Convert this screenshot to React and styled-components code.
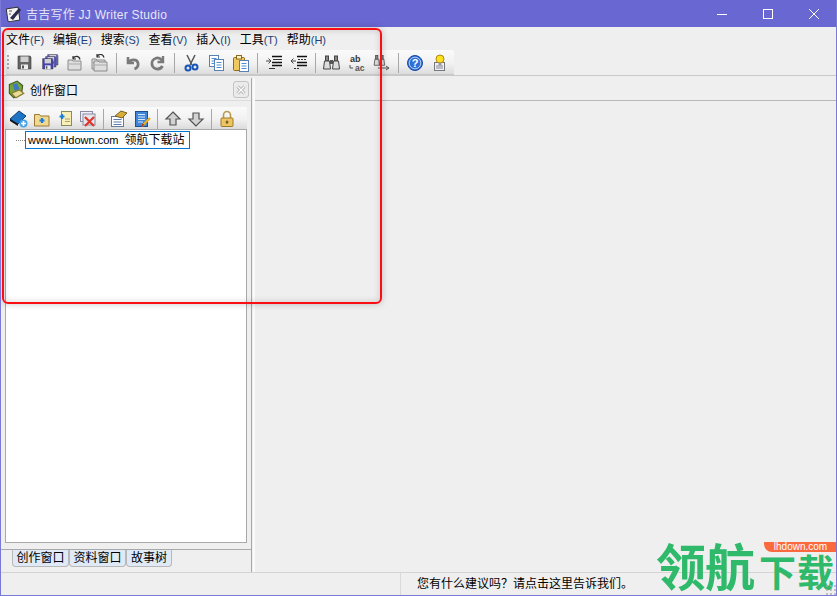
import React from 'react';
import styled, { createGlobalStyle } from 'styled-components';

const Global = createGlobalStyle`
  html, body { margin: 0; padding: 0; background: #efefef; overflow: hidden; }
  * { box-sizing: border-box; }
`;

const CJK = `"Liberation Sans", "Noto Sans CJK SC", sans-serif`;

const Win = styled.div`
  position: relative;
  width: 837px;
  height: 596px;
  display: flex;
  flex-direction: column;
  background: #efefef;
  border: 1px solid #7b79d6;
  border-top: 0;
  font-family: ${CJK};
  font-size: 12px;
  color: #000;
  overflow: hidden;
`;

const TitleBar = styled.div`
  height: 27px;
  flex: none;
  margin: 0 -1px;
  background: #6967d1;
  display: flex;
  align-items: center;
  padding-left: 5px;
  color: #e6e6f7;
  font-size: 12px;
`;
const TitleText = styled.span`
  margin-left: 3px;
  flex: 1;
  letter-spacing: 0.25px;
`;
const WinBtn = styled.div`
  width: 46px;
  height: 27px;
  display: flex;
  align-items: center;
  justify-content: center;
`;

const MenuBar = styled.div`
  height: 23px;
  flex: none;
  display: flex;
  align-items: center;
  padding-left: 5px;
  gap: 9px;
`;
const MenuItem = styled.span`
  white-space: nowrap;
  span { color: #1c3f78; font-size: 11px; }
`;

const Bar = styled.div`
  display: flex;
  align-items: center;
  height: ${p => p.$h}px;
  width: ${p => p.$w}px;
  flex: none;
  padding-top: 2px;
  background: linear-gradient(#fafafa, #f2f2f2 55%, #dcdcdc);
  border-bottom: 1px solid #c8c8c8;
`;
const MainToolbar = styled(Bar)`
  position: relative;
  margin-left: 5px;
  padding-left: 6px;
  border-radius: 2px 2px 0 0;
`;
const Grip = styled.div`
  position: absolute;
  left: 1px;
  top: 5px;
  width: 2px;
  height: 15px;
  background: repeating-linear-gradient(#aaa 0 2px, transparent 2px 4px);
`;
const Tool = styled.div`
  width: ${p => p.$w}px;
  height: 20px;
  flex: none;
  display: flex;
  align-items: center;
  justify-content: center;
`;
const Sep = styled.div`
  width: 8px;
  height: 20px;
  flex: none;
  display: flex;
  justify-content: center;
  &::after { content: ''; width: 1px; background: #a8a8a8; }
`;
const TopRule = styled.div`
  height: 3px;
  flex: none;
  border-top: 1px solid #c9c9c9;
`;

const Main = styled.div`
  flex: 1;
  display: flex;
  min-height: 0;
`;
const LeftPane = styled.div`
  width: 251px;
  flex: none;
  border-right: 1px solid #a9a9a9;
  display: flex;
  flex-direction: column;
`;
const PaneHead = styled.div`
  height: 23px;
  flex: none;
  display: flex;
  align-items: center;
  padding: 1px 2px 0 5px;
  border-bottom: 1px solid #dcdcdc;
`;
const PaneTitle = styled.span`
  margin-left: 4px;
  flex: 1;
`;
const CloseBtn = styled.div`
  width: 16px;
  height: 17px;
  border: 1px solid #c4c4c4;
  border-radius: 3px;
  background: #ebebeb;
  display: flex;
  align-items: center;
  justify-content: center;
`;
const PaneToolbar = styled(Bar)`
  margin: 6px 0 0 4px;
  padding-left: 2px;
  border-bottom: 0;
`;
const Tree = styled.div`
  flex: 1;
  margin: 0 4px;
  background: #fff;
  border: 1px solid #a9a9a9;
  padding: 1px 0 0 10px;
  display: flex;
  align-items: flex-start;
`;
const TreeDots = styled.div`
  width: 9px;
  margin-top: 9px;
  border-top: 1px dotted #888;
`;
const TreeEdit = styled.div`
  width: 165px;
  height: 18px;
  border: 1px solid #0078d7;
  padding-left: 2px;
  line-height: 17px;
  white-space: pre;
  background: #fff;
`;
const Latin = styled.span`
  font-size: 11px;
`;
const Tabs = styled.div`
  height: 23px;
  flex: none;
  margin-top: 6px;
  border-top: 1px solid #a9a9a9;
  padding-left: 11px;
  display: flex;
  align-items: flex-start;
`;
const Tab = styled.div`
  height: 17px;
  width: ${p => p.$w}px;
  background: #e0e9f6;
  border: 1px solid #b8b8b8;
  border-top: 0;
  border-radius: 0 0 4px 4px;
  text-align: center;
  line-height: 17px;
`;
const RightPane = styled.div`
  flex: 1;
  border-left: 2px solid #fafafa;
  margin-left: 1px;
`;
const RightHead = styled.div`
  height: 23px;
  border-bottom: 1px solid #b9b9b9;
`;
const StatusBar = styled.div`
  height: 23px;
  flex: none;
  border-top: 1px solid #d4d4d4;
  display: flex;
  align-items: center;
  padding-left: 399px;
`;
const StatusCell = styled.div`
  border-left: 1px solid #d9d9d9;
  padding-left: 16px;
  height: 22px;
  line-height: 22px;
`;

/* over the page: the red mark from the screenshot and the site's watermark */
const RedMark = styled.div`
  position: absolute;
  left: 1px;
  top: 28px;
  width: 380px;
  height: 276px;
  border: 2px solid #fb0d14;
  border-radius: 6px;
  box-shadow: 0 0 7px rgba(0,0,0,.22), inset 0 0 7px rgba(0,0,0,.16);
  pointer-events: none;
`;
const Mark = styled.div`
  position: absolute;
  right: -1px;
  bottom: 3px;
  width: 181px;
  height: 52px;
  font-family: "Noto Sans CJK SC", sans-serif;
  font-weight: 700;
  color: #2fb96b;
  display: flex;
  align-items: flex-end;
  white-space: nowrap;
`;
const MarkBig = styled.span`
  font-size: 50px;
  line-height: 52px;
  letter-spacing: -1px;
  margin-bottom: 2px;
`;
const MarkSmall = styled.span`
  font-size: 37px;
  line-height: 42px;
  margin-left: 5px;
  letter-spacing: 1px;
`;
const Pill = styled.div`
  position: absolute;
  right: 0;
  top: 2px;
  width: 73px;
  height: 10px;
  background: #fb6a3e;
  border-radius: 0 0 0 8px;
  color: #fff;
  font: 400 10px/10px "Liberation Sans", sans-serif;
  text-align: center;
`;
const ResizeGrip = styled.div`
  position: absolute;
  right: 0;
  bottom: 0;
  width: 11px;
  height: 11px;
  background: radial-gradient(circle, #aaa 1px, transparent 1.2px) 0 0 / 4px 4px;
  opacity: .7;
`;

const S = ({ children, w = 18, h = 18, vb = '0 0 18 18' }) => (
  <svg width={w} height={h} viewBox={vb} style={{ display: 'block' }}>{children}</svg>
);

const Floppy = ({ dark = '#666', x = 0, y = 0 }) => (
  <g transform={`translate(${x} ${y})`}>
    <path d="M2 2h12l1 1v12H2z" fill={dark} stroke="#3a3a3a" strokeWidth=".6" />
    <rect x="4.500" y="2.500" width="8" height="5.500" fill="#d0d0d0" />
    <rect x="5" y="10.500" width="7" height="4.500" fill="#eee" />
    <rect x="6" y="11.500" width="2" height="3" fill="#555" />
  </g>
);
const SaveIcon = () => <S><Floppy /></S>;
const SaveAllIcon = () => (
  <S>
    <g transform="translate(5 -1) scale(.8)"><Floppy dark="#6a6ac0" /></g>
    <g transform="translate(3 1) scale(.8)"><Floppy dark="#5a5ab8" /></g>
    <g transform="translate(0 3) scale(.8)"><Floppy dark="#4444ac" /></g>
  </S>
);
const Bin = ({ x = 0, y = 0 }) => (
  <g transform={`translate(${x} ${y})`}>
    <path d="M2 6h4l1 1h8v9H2z" fill="#dedede" stroke="#8a8a8a" />
    <path d="M2.500 10h12.500" stroke="#aaa" />
  </g>
);
const Curl = () => <path d="M7 4.500c2-3 6-3 7 1M7 2v3h3" fill="none" stroke="#333" strokeWidth="1.200" />;
const OpenIcon = () => <S><Bin /><Curl /></S>;
const OpenAllIcon = () => (
  <S><Bin x="-1" y="-1" /><Bin x="1" y="1" /><g transform="translate(-1 -2)"><Curl /></g></S>
);
const UndoIcon = () => (
  <S>
    <path d="M4 3v6h6" fill="none" stroke="#7a7a7a" strokeWidth="2.600" />
    <path d="M4.500 8.500C7 5 13 5 14 9c.5 2.500-1 5-3.500 6" fill="none" stroke="#7a7a7a" strokeWidth="2.800" />
  </S>
);
const RedoIcon = () => (
  <S>
    <path d="M14 2v6h-5.500" fill="none" stroke="#7a7a7a" strokeWidth="2.400" />
    <path d="M13.500 7.500A5.500 5.500 0 109 15a5.500 5.500 0 004.500-3" fill="none" stroke="#7a7a7a" strokeWidth="2.800" />
  </S>
);
const CutIcon = () => (
  <S>
    <path d="M5 1l5 10M13 1l-5 10" stroke="#555" strokeWidth="1.500" />
    <circle cx="6" cy="14" r="2.500" fill="none" stroke="#1655b8" strokeWidth="2" />
    <circle cx="13" cy="13" r="2.500" fill="none" stroke="#1655b8" strokeWidth="2" />
  </S>
);
const Sheet = ({ x, y, line = '#4a8fd8', w = 9, h = 11 }) => (
  <g transform={`translate(${x} ${y})`}>
    <rect width={w} height={h} fill="#fff" stroke="#5a7fb0" />
    <path d={`M2 3h${w - 4}M2 5.500h${w - 4}M2 8h${w - 4}`} stroke={line} />
  </g>
);
const CopyIcon = () => <S><Sheet x="2.500" y="1.500" /><Sheet x="7.500" y="5.500" /></S>;
const PasteIcon = () => (
  <S>
    <rect x="1.500" y="3.500" width="11" height="13" rx="1" fill="#f0c860" stroke="#8a6a20" />
    <rect x="4.500" y="1.500" width="5" height="3.500" fill="#fff2b8" stroke="#8a6a20" />
    <Sheet x="7.500" y="6.500" />
  </S>
);
const IndentIcon = ({ flip }) => (
  <S>
    <path d="M7 2.500h10M7 8.500h10M7 11.500h10" stroke="#111" strokeWidth="1.500" />
    <path d="M8 5.500h9M4 14.500h6" stroke="#333" strokeWidth="1.200" strokeDasharray={flip ? '2 1' : undefined} />
    <path d={flip ? 'M6 7h-5M3.500 4.500L1 7l2.500 2.500' : 'M1 7h5M3.500 4.500L6 7 3.500 9.500'} fill="none" stroke="#444" />
  </S>
);
const OutdentIcon = () => <IndentIcon flip />;
const Binocular = ({ x = 0 }) => (
  <g transform={`translate(${x} 0)`}>
    <rect x="2.500" y="2" width="3" height="5" fill="#888" stroke="#444" />
    <path d="M1.500 7h5l1 8h-7z" fill="#ddd" stroke="#444" />
  </g>
);
const FindIcon = () => <S><Binocular /><Binocular x="9" /><rect x="7" y="6" width="3" height="4" fill="#555" /></S>;
const ReplaceIcon = () => (
  <S>
    <text x="2" y="8" fontSize="9" fontFamily="Liberation Sans" fontWeight="700" fill="#333">ab</text>
    <text x="7" y="17" fontSize="8.500" fontFamily="Liberation Sans" fontWeight="700" fill="#555">ac</text>
    <path d="M2 11v3h3" fill="none" stroke="#555" />
  </S>
);
const FindNextIcon = () => (
  <S>
    <g transform="scale(.75)"><Binocular x="1" /><Binocular x="8" /></g>
    <path d="M5 14h11M13 12l3 2-3 2" fill="none" stroke="#555" />
  </S>
);
const HelpIcon = () => (
  <S>
    <circle cx="9" cy="9" r="7.500" fill="#2f6fd6" stroke="#1a4aa0" />
    <circle cx="9" cy="9" r="5.800" fill="none" stroke="#cfe2fb" strokeWidth=".8" />
    <text x="9" y="13" fontSize="11" fontFamily="Liberation Sans" fontWeight="700" fill="#fff" textAnchor="middle">?</text>
  </S>
);
const TipIcon = () => (
  <S>
    <rect x="3.500" y="8.500" width="10" height="8" fill="#eef" stroke="#777" />
    <path d="M5 12h7M5 14h7" stroke="#888" />
    <circle cx="9" cy="5" r="4" fill="#ffe020" stroke="#b08a10" />
    <rect x="7.500" y="8.500" width="3" height="3" fill="#999" />
  </S>
);
const BookIcon = () => (
  <S w="20" h="20" vb="0 0 20 20">
    <path d="M1 10L10 2l7 5-8 8z" fill="#1d73c4" stroke="#0f3e78" />
    <path d="M1 10v2l8 5v-2z" fill="#111" />
    <circle cx="14.500" cy="14.500" r="4" fill="#4aa3e6" />
    <path d="M14.500 12v5M12 14.500h5" stroke="#fff" strokeWidth="1.600" />
  </S>
);
const Plus = () => <path d="M8 7v5M5.500 9.500h5" stroke="#1d7fd8" strokeWidth="2.200" />;
const FolderAddIcon = () => (
  <S>
    <path d="M1.500 4.500h5l1 1.500h8.500v10h-14.500z" fill="#f0d890" stroke="#9a7a30" />
    <g transform="translate(1 1)"><Plus /></g>
  </S>
);
const DocAddIcon = () => (
  <S>
    <rect x="5.500" y="1.500" width="10" height="14" fill="#f7eeb8" stroke="#8a8a5a" />
    <path d="M9 9h5M9 11.500h5" stroke="#aaa070" />
    <g transform="translate(-2 -3)"><Plus /></g>
  </S>
);
const DeleteIcon = () => (
  <S>
    <rect x="1.500" y="1.500" width="12" height="10" fill="#eef" stroke="#8a8aa0" />
    <rect x="4" y="4" width="12" height="11" fill="#e6e6ee" stroke="#8a8aa0" />
    <path d="M6 7l9 9M15 7l-9 9" stroke="#e0362c" strokeWidth="2.200" />
  </S>
);
const PropsIcon = () => (
  <S>
    <rect x="1.500" y="6.500" width="12" height="10" fill="#fff" stroke="#6a7a9a" />
    <path d="M3.500 9.500h8M3.500 12h8M3.500 14.500h8" stroke="#5a7ab0" />
    <path d="M5 6l6-5 6 2-5 5z" fill="#d8ae3a" stroke="#7a6020" />
  </S>
);
const NotebookIcon = () => (
  <S>
    <rect x="2.500" y="1.500" width="12" height="15" fill="#3e86d8" stroke="#1c4f94" />
    <path d="M5 4.500h7M5 7h7M5 9.500h7M5 12h5" stroke="#d8e8fb" />
    <path d="M9 16l8-8" stroke="#e8b020" strokeWidth="2.400" />
    <path d="M9 16l1.500-2" stroke="#c02818" strokeWidth="1.500" />
  </S>
);
const ArrowIcon = ({ down }) => (
  <S>
    <path
      transform={down ? 'rotate(180 9 9)' : undefined}
      d="M9 2l7 7h-4v6H6V9H2z"
      fill="#d2d2d2"
      stroke="#555"
      strokeWidth="1.200"
    />
  </S>
);
const DownIcon = () => <ArrowIcon down />;
const LockIcon = () => (
  <S>
    <path d="M5.500 8V5a3.500 3.500 0 017 0v3" fill="none" stroke="#b89a50" strokeWidth="1.600" />
    <rect x="3" y="8" width="12" height="8.500" rx="1" fill="#eec565" stroke="#a07a28" />
    <path d="M9 10.500v3.500M7.500 12h3" stroke="#5a4010" />
  </S>
);
const PaneIcon = () => (
  <S w="20" h="20">
    <path d="M3 4l7-3 5 4-1 8-7 3-4-4z" fill="#7aa33c" stroke="#3e5c20" />
    <path d="M6 4l4-1 2 5-4 2z" fill="#3a78c8" />
    <path d="M5 12l7-3 4 3-7 4z" fill="#e8dc98" stroke="#8a7a30" />
  </S>
);
const AppIcon = () => (
  <S>
    <rect x="2" y="3" width="12" height="13" rx="1" fill="#f4f4f4" stroke="#333" transform="rotate(-8 8 9)" />
    <path d="M5 13L14 3l2 2-8 10z" fill="#2a2a4a" />
    <path d="M4 6h3M4 9h2" stroke="#555" />
  </S>
);

const mainTools = [
  SaveIcon, SaveAllIcon, OpenIcon, OpenAllIcon, null,
  UndoIcon, RedoIcon, null,
  CutIcon, CopyIcon, PasteIcon, null,
  IndentIcon, OutdentIcon, null,
  FindIcon, ReplaceIcon, FindNextIcon, null,
  HelpIcon, TipIcon,
];
const paneTools = [
  BookIcon, FolderAddIcon, DocAddIcon, DeleteIcon, null,
  PropsIcon, NotebookIcon, null,
  ArrowIcon, DownIcon, null,
  LockIcon,
];
const menus = [
  ['文件', 'F'], ['编辑', 'E'], ['搜索', 'S'], ['查看', 'V'],
  ['插入', 'I'], ['工具', 'T'], ['帮助', 'H'],
];

const tools = (list, w) => list.map((Icon, i) =>
  Icon ? <Tool key={i} $w={w}><Icon /></Tool> : <Sep key={i} />
);

export default function App() {
  return (
    <>
      <Global />
      <Win>
        <TitleBar>
          <AppIcon />
          <TitleText>吉吉写作 JJ Writer Studio</TitleText>
          <WinBtn>
            <svg width="10" height="10"><path d="M0 5.500h10" stroke="#fff" /></svg>
          </WinBtn>
          <WinBtn>
            <svg width="10" height="10"><rect x=".5" y=".5" width="9" height="9" fill="none" stroke="#fff" /></svg>
          </WinBtn>
          <WinBtn>
            <svg width="10" height="10"><path d="M0 0l10 10M10 0L0 10" stroke="#fff" /></svg>
          </WinBtn>
        </TitleBar>
        <MenuBar>
          {menus.map(([name, key]) => (
            <MenuItem key={key}>{name}<span>({key})</span></MenuItem>
          ))}
        </MenuBar>
        <MainToolbar $w={448} $h={25}>
          <Grip />
          {tools(mainTools, 25)}
        </MainToolbar>
        <TopRule />
        <Main>
          <LeftPane>
            <PaneHead>
              <PaneIcon />
              <PaneTitle>创作窗口</PaneTitle>
              <CloseBtn>
                <svg width="10" height="10">
                  <path d="M1.500 1.500l7 7M8.500 1.500l-7 7" stroke="#a8a8a8" strokeWidth="3" />
                  <path d="M1.500 1.500l7 7M8.500 1.500l-7 7" stroke="#fff" strokeWidth="1.400" />
                </svg>
              </CloseBtn>
            </PaneHead>
            <PaneToolbar $w={242} $h={22}>{tools(paneTools, 23)}</PaneToolbar>
            <Tree>
              <TreeDots />
              <TreeEdit><Latin>www.LHdown.com  </Latin>领航下载站</TreeEdit>
            </Tree>
            <Tabs>
              <Tab $w={57}>创作窗口</Tab>
              <Tab $w={57}>资料窗口</Tab>
              <Tab $w={46}>故事树</Tab>
            </Tabs>
          </LeftPane>
          <RightPane>
            <RightHead />
          </RightPane>
        </Main>
        <StatusBar>
          <StatusCell>您有什么建议吗？请点击这里告诉我们。</StatusCell>
        </StatusBar>
        <RedMark />
        <Mark>
          <MarkBig>领航</MarkBig>
          <MarkSmall>下载</MarkSmall>
          <Pill>lhdown.com</Pill>
        </Mark>
        <ResizeGrip />
      </Win>
    </>
  );
}
